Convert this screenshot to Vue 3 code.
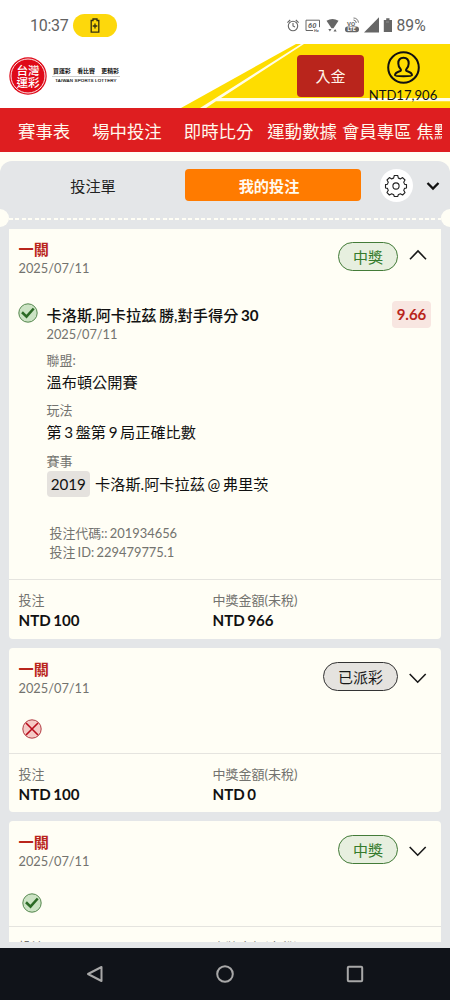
<script setup>
const navItems = [
  { text: '賽事表', gap: 22 },
  { text: '場中投注', gap: 22 },
  { text: '即時比分', gap: 14 },
  { text: '運動數據', gap: 5 },
  { text: '會員專區', gap: 5 },
  { text: '焦點', gap: 0 },
]

const details = [
  { label: '聯盟:', value: '溫布頓公開賽' },
  { label: '玩法', value: '第 3 盤第 9 局正確比數' },
  { label: '賽事', tag: '2019', value: '卡洛斯.阿卡拉茲 @ 弗里茨' },
]

const bets = [
  { id: 1, open: true, status: '中獎', won: true, stake: 'NTD 100', payout: 'NTD 966' },
  { id: 2, open: false, status: '已派彩', won: false, stake: 'NTD 100', payout: 'NTD 0' },
  { id: 3, open: false, status: '中獎', won: true, stake: 'NTD 100', payout: 'NTD 966' },
]
</script>

<template>
  <div class="phone">
    <div class="status">
      <span class="clock">10:37</span>
      <span class="saver">
        <svg width="10" height="15" viewBox="0 0 10 15" fill="none" stroke="#333010" stroke-width="1.3">
          <path d="M3 2.5V1h4v1.5h1.8v11.7H1.2V2.5zM5 5.5v5M2.7 8h4.6" />
        </svg>
      </span>
      <svg class="indicators" width="110" height="20" viewBox="285 15 110 20">
        <g fill="none" stroke="#666" stroke-width="1.1">
          <circle cx="293" cy="26" r="4.7" />
          <path d="M293 23v3l2 1M287.4 22.7l2.8-2.7M298.6 22.7l-2.8-2.7" />
          <path d="M313 30.5h-7V20.2h13.5v7" stroke-width="1" />
        </g>
        <g fill="#666">
          <text x="308" y="28.2" class="hz">60</text>
          <text x="314" y="32" class="tiny">Hz</text>
          <path d="M326.5 20.7q6-3.4 12 0l-5 7.6h-2z" />
          <path d="M328.3 29h3.2l-1.6 2.4zM333.5 31.4h3.2l-1.6-2.4z" />
          <text x="347" y="25.6" class="vo">VO</text>
          <rect x="345" y="26.6" width="14" height="5.6" rx="2.6" />
          <path d="M364 32.4h15V17.3z" />
          <path d="M386.2 18.2h3.3v1.7h2.5v12.2h-8.2V19.9h2.4z" />
        </g>
        <text x="347.4" y="31.2" class="lte">LTE</text>
        <path d="M353.5 20q2.5 0 2.8 3M353.5 18q4.2 0 5 4.6" fill="none" stroke="#666" stroke-width=".9" />
        <path d="M386 22h3" stroke="#999" stroke-width=".8" />
      </svg>
      <span class="percent">89%</span>
    </div>

    <header class="header">
      <svg class="stripes" width="450" height="64" viewBox="0 0 450 64">
        <path d="M296 0H450V64H181z" fill="#fedd00" />
        <path d="M301 0H304L221 54H450V57.3H216L206 64H200z" fill="#fffde8" />
      </svg>
      <svg class="seal" width="38" height="38" viewBox="0 0 38 38">
        <circle cx="19" cy="19" r="18.7" fill="#df0918" />
        <circle cx="19" cy="19" r="17" fill="none" stroke="#fff" stroke-width=".9" />
        <text x="19" y="18" class="seal-text">台灣</text>
        <text x="19" y="29.6" class="seal-text">運彩</text>
      </svg>
      <div class="slogan">
        <div class="slogan-zh"><span>買運彩</span><span>看比賽</span><span>更精彩</span></div>
        <div class="slogan-en">TAIWAN SPORTS LOTTERY</div>
      </div>
      <button class="deposit">入金</button>
      <div class="account">
        <svg width="33" height="33" viewBox="0 0 33 33" fill="none" stroke="#111" stroke-width="2">
          <circle cx="16.5" cy="16.5" r="15.3" />
          <path d="M16.5 6.8c-3.5 0-5.2 2.5-5.2 5.7 0 2.5 1 4.2 2.3 5.7.8 1 .3 1.7-1 2.1-2.5.8-4.6 1.6-4.6 4 0 1.3 17 1.3 17 0 0-2.4-2.1-3.2-4.6-4-1.3-.4-1.8-1.1-1-2.1 1.3-1.5 2.3-3.2 2.3-5.7 0-3.2-1.7-5.7-5.2-5.7z" />
        </svg>
        <span class="balance">NTD17,906</span>
      </div>
    </header>

    <nav class="nav">
      <div class="nav-track">
        <a v-for="n in navItems" :key="n.text" :style="{ marginRight: n.gap + 'px' }">{{ n.text }}</a>
      </div>
    </nav>

    <main class="panel">
      <div class="tabs">
        <div class="tab">投注單</div>
        <div class="tab active">我的投注</div>
        <div class="gear">
          <svg width="24" height="24" viewBox="0 0 24 24" fill="none" stroke="#222" stroke-width="1.1" stroke-linejoin="round">
            <circle cx="12" cy="12" r="3.1" />
            <path d="M10.3 1.5h3.4l.7 2.6q1 .3 1.9.8l2.3-1.3 2.4 2.4-1.3 2.3q.5.9.8 1.9l2 .4v3.4l-2 .4q-.3 1-.8 1.9l1.3 2.3-2.4 2.4-2.3-1.3q-.9.5-1.9.8l-.7 2h-3.4l-.7-2q-1-.3-1.9-.8l-2.3 1.3L3 18.600l1.300-2.300q-.5-.9-.8-1.900l-2-.4v-3.400l2-.4q.3-1 .8-1.900L3 6l2.400-2.400 2.300 1.300q.9-.5 1.900-.8z" />
          </svg>
        </div>
        <svg class="caret" width="14" height="10" viewBox="0 0 14 10" fill="none" stroke="#111" stroke-width="2.3">
          <path d="M1.500 2L7 7.500 12.500 2" />
        </svg>
      </div>
      <div class="perforation"><i></i><b></b><i></i></div>

      <div class="list">
        <article v-for="b in bets" :key="b.id" class="card" :class="{ folded: !b.open }">
          <div class="card-head">
            <div>
              <div class="kind">一關</div>
              <div class="date">2025/07/11</div>
            </div>
            <span class="pill" :class="{ green: b.won }">{{ b.status }}</span>
            <svg class="chev" width="18" height="12" viewBox="0 0 18 12" fill="none" stroke="#181818" stroke-width="1.6">
              <path :d="b.open ? 'M1 10.200L9 2l8 8.200' : 'M.7 2l8 8.200 8-8.200'" />
            </svg>
          </div>

          <div class="card-body" :class="{ open: b.open }">
            <svg class="mark" width="20" height="20" viewBox="0 0 20 20">
              <template v-if="b.won">
                <circle cx="10" cy="10" r="9.2" fill="#cce3c4" stroke="#447a3d" stroke-width=".9" />
                <path d="M4 9.300l4.500 4.300L15.700 5.500" fill="none" stroke="#2c6a25" stroke-width="2.600" />
              </template>
              <template v-else>
                <circle cx="10" cy="10" r="9.2" fill="#f5c9c5" stroke="#a92831" stroke-width=".9" />
                <path d="M4 4l12 12M16 4L4 16" fill="none" stroke="#b90d1c" stroke-width="1.600" />
              </template>
            </svg>
            <div v-if="b.open" class="pick">
              <div class="pick-head">
                <span class="pick-name">卡洛斯.阿卡拉茲 勝,對手得分 <strong>30</strong></span>
                <span class="odds">9.66</span>
              </div>
              <div class="date pick-date">2025/07/11</div>
              <div v-for="d in details" :key="d.label" class="detail">
                <div class="label">{{ d.label }}</div>
                <div class="value"><span v-if="d.tag" class="tag">{{ d.tag }}</span>{{ d.value }}</div>
              </div>
              <div class="codes">
                <div>投注代碼:: 201934656</div>
                <div>投注 ID: 229479775.1</div>
              </div>
            </div>
          </div>

          <div class="card-foot">
            <div>
              <div class="label">投注</div>
              <div class="amount">{{ b.stake }}</div>
            </div>
            <div>
              <div class="label">中獎金額(未稅)</div>
              <div class="amount">{{ b.payout }}</div>
            </div>
          </div>
        </article>
      </div>
    </main>

    <footer class="system">
      <svg width="18" height="18" viewBox="0 0 18 18"><path d="M15.500 2v14L2 9z" /></svg>
      <svg width="20" height="20" viewBox="0 0 20 20"><circle cx="10" cy="10" r="7.8" /></svg>
      <svg width="18" height="18" viewBox="0 0 18 18"><rect x="1.8" y="1.8" width="14.4" height="14.4" rx="1" /></svg>
    </footer>
  </div>
</template>

<style>
html, body { margin: 0; background: #fff; overflow: hidden; }
</style>

<style scoped>
.phone {
  width: 450px; height: 1000px; overflow: hidden; display: flex; flex-direction: column;
  background: #fffef5; color: #111;
  font-family: Lato, "Noto Sans CJK TC", sans-serif; font-size: 15.2px;
}
.phone * { box-sizing: border-box; }
.phone svg { display: block; flex: none; }

.status { height: 44px; flex: none; display: flex; align-items: center; padding: 6px 0 0 30px; background: #fff; font-family: Roboto, sans-serif; color: #626262; }
.clock { font-size: 16px; width: 43px; letter-spacing: -.3px; }
.saver { width: 44px; height: 23px; border-radius: 12px; background: #fdd80c; display: grid; place-items: center; }
.indicators { margin-left: 168px; }
.percent { font-size: 15.7px; margin-left: 1.5px; }
.hz { font: italic 700 7.5px Roboto, sans-serif; }
.tiny { font: 700 4px Roboto, sans-serif; }
.vo { font: 700 6px Roboto, sans-serif; }
.lte { font: 700 5px Roboto, sans-serif; fill: #fff; }

.header { position: relative; height: 64px; flex: none; display: flex; background: #fff; }
.stripes { position: absolute; left: 0; top: 0; }
.seal { position: relative; margin: 13px 0 0 9px; }
.seal-text { font: 500 11.6px "Noto Sans CJK TC", sans-serif; fill: #fff; text-anchor: middle; }
.slogan { position: relative; margin: 22px 0 0 5px; width: 68px; height: 19px; }
.slogan-zh { display: flex; justify-content: space-between; padding: 0 1px; height: 11px; border-bottom: 1px solid #ccc; font: 700 5.9px/10px "Noto Sans CJK TC", sans-serif; }
.slogan-en { font: 4.4px/8px "Liberation Sans", sans-serif; text-align: center; white-space: nowrap; letter-spacing: .2px; -webkit-text-stroke: .15px #111; }
.deposit { position: relative; margin: 11px 0 0 177px; width: 67px; height: 42px; border: 0; border-radius: 4px; background: #b9251c; color: #fff5ea; font: 15px/42px Lato, "Noto Sans CJK TC", sans-serif; padding: 0; }
.account { position: relative; width: 78px; margin: 7px 0 0 0; display: flex; flex-direction: column; align-items: center; }
.balance { font-size: 13.1px; line-height: 16px; margin-top: 3px; white-space: nowrap; }

.nav { height: 44px; flex: none; background: #de1e20; padding: 0 8px 0 18px; color: #fff8ec; }
.nav-track { display: flex; overflow: hidden; font-size: 17.4px; line-height: 47px; height: 44px; white-space: nowrap; }
.nav-track a { flex: none; }

.panel { height: 787px; flex: none; margin-top: 9px; background: #e4e6e8; border-radius: 12px 12px 0 0; display: flex; flex-direction: column; }
.tabs { display: flex; align-items: flex-start; height: 48px; padding-top: 8px; flex: none; }
.tab { width: 176px; height: 32px; line-height: 34px; text-align: center; margin-left: 5px; color: #222; font-size: 15.2px; }
.tab.active { margin-left: 3.5px; padding-right: 7px; background: #ff7b00; color: #fffaf0; font-weight: 700; border-radius: 4px; }
.gear { width: 33px; height: 33px; margin-left: 19px; border-radius: 50%; background: #fff; display: grid; place-items: center; }
.caret { margin: 12px 0 0 13.5px; }
.perforation { height: 18px; flex: none; display: flex; align-items: center; justify-content: space-between; }
.perforation i { width: 9px; height: 18px; background: #fffef5; border-radius: 0 9px 9px 0; }
.perforation i:last-child { width: 9px; border-radius: 9px 0 0 9px; }
.perforation b { flex: 1; height: 2px; margin-top: 1px; background: repeating-linear-gradient(90deg, #fffef5 0 4px, transparent 4px 6.4px); }

.list { height: 713px; overflow: hidden; flex: none; margin-top: 2px; padding: 0 9px; display: flex; flex-direction: column; gap: 9px; }
.card { flex: none; background: #fffef5; border-radius: 4px; }
.card:first-child { border-radius: 0 0 4px 4px; }
.card-head { height: 58px; display: flex; align-items: flex-start; padding: 10.5px 14.5px 0 9.5px; }
.folded .card-head { padding-top: 12px; }
.kind { height: 19px; line-height: 19px; font-weight: 700; color: #b9251c; }
.date { height: 18px; line-height: 18px; font-size: 12.8px; color: #73736f; }
.pill { margin-left: auto; margin-top: 2px; height: 29px; padding: 0 13.5px; border-radius: 15px; border: 1px solid #333; background: #e5e3df; line-height: 29px; color: #181818; font-size: 15px; }
.folded .pill { margin-top: 2px; }
.pill.green { background: #e7efdf; border-color: #437b38; color: #347b2c; }
.chev { margin: 9px 0 0 11px; }
.folded .chev { margin-top: 12px; }
.card-body { height: 47px; padding: 13.5px 10px 0 13px; display: flex; align-items: flex-start; }
.card-body.open { height: 292px; padding: 15.5px 10px 0 9px; }
.pick { flex: 1; margin-left: 8.5px; margin-top: -1.5px; }
.pick-head { display: flex; justify-content: space-between; height: 27px; }
.pick-name { font-weight: 500; line-height: 28px; word-spacing: -1.3px; }
.pick-name strong { font-weight: 700; }
.odds { width: 39px; height: 27px; border-radius: 4px; background: #f8e6e1; color: #b9251c; font-weight: 700; font-size: 15px; line-height: 27px; text-align: center; }
.pick-date { margin-top: -3px; }
.detail { margin-top: 8px; height: 42.5px; }
.pick-date + .detail { margin-top: 7.5px; }
.label { font-size: 13px; line-height: 19px; height: 19px; color: #73736f; }
.value { line-height: 24px; height: 24px; white-space: nowrap; word-spacing: -1.3px; }
.tag { display: inline-block; width: 43.5px; height: 26px; line-height: 26px; border-radius: 4px; background: #e5e2de; text-align: center; margin-right: 5px; }
.codes { margin: 30px 0 0 3px; font-size: 12.9px; line-height: 19px; color: #73736f; word-spacing: -1px; }
.codes div { height: 19px; }
.card-foot { height: 59.5px; border-top: 1px solid #e5e4df; padding: 11px 0 0 9.5px; display: grid; grid-template-columns: 194px 1fr; }
.amount { font-weight: 700; line-height: 21px; height: 21px; font-size: 15.1px; word-spacing: -1px; }

.system { height: 52px; flex: none; background: #101319; display: flex; align-items: center; justify-content: center; gap: 111px; }
.system svg { fill: none; stroke: #a8a8a8; stroke-width: 2; stroke-linejoin: round; }
</style>
